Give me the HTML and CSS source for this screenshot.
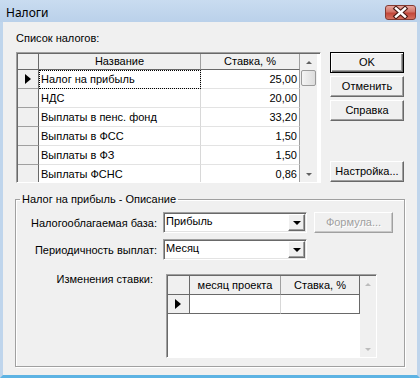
FILE: index.html
```html
<!DOCTYPE html>
<html lang="ru">
<head>
<meta charset="utf-8">
<title>Налоги</title>
<link rel="stylesheet" href="styles.css">
</head>
<body>
<div class="window">
  <div class="titlebar">
    <span class="title">Налоги</span>
    <span class="close">
      <svg width="29" height="13" viewBox="0 0 29 13">
        <path d="M10 2.5 L19 10.5 M19 2.5 L10 10.5" stroke="#4a1a14" stroke-width="4.6" stroke-linecap="square"/>
        <path d="M10 2.5 L19 10.5 M19 2.5 L10 10.5" stroke="#fff" stroke-width="2.4" stroke-linecap="square"/>
      </svg>
    </span>
  </div>

  <div class="client">
    <div class="top">
      <div class="list">
        <div class="caption">Список налогов:</div>
        <div class="grid tax-grid">
          <div class="grid-body">
            <div class="row head">
              <div class="cell ind"></div>
              <div class="cell center">Название</div>
              <div class="cell center">Ставка, %</div>
            </div>
            <div class="row">
              <div class="cell ind"><span class="arrow"></span></div>
              <div class="cell focus">Налог на прибыль</div>
              <div class="cell num">25,00</div>
            </div>
            <div class="row">
              <div class="cell ind"></div>
              <div class="cell">НДС</div>
              <div class="cell num">20,00</div>
            </div>
            <div class="row">
              <div class="cell ind"></div>
              <div class="cell">Выплаты в пенс. фонд</div>
              <div class="cell num">33,20</div>
            </div>
            <div class="row">
              <div class="cell ind"></div>
              <div class="cell">Выплаты в ФСС</div>
              <div class="cell num">1,50</div>
            </div>
            <div class="row">
              <div class="cell ind"></div>
              <div class="cell">Выплаты в ФЗ</div>
              <div class="cell num">1,50</div>
            </div>
            <div class="row">
              <div class="cell ind"></div>
              <div class="cell">Выплаты ФСНС</div>
              <div class="cell num">0,86</div>
            </div>
          </div>
          <div class="vscroll">
            <span class="sarrow up"></span>
            <span class="thumb"></span>
            <span class="track"></span>
            <span class="sarrow down"></span>
          </div>
        </div>
      </div>
      <div class="buttons">
        <div class="btn default">OK</div>
        <div class="btn">Отменить</div>
        <div class="btn">Справка</div>
        <div class="btn setup">Настройка...</div>
      </div>
    </div>

    <fieldset class="group">
      <legend>Налог на прибыль - Описание</legend>
      <div class="form">
        <div class="label">Налогооблагаемая база:</div>
        <div class="field">
          <div class="combo">Прибыль<span class="drop"></span></div>
          <div class="btn disabled">Формула...</div>
        </div>
        <div class="label">Периодичность выплат:</div>
        <div class="field">
          <div class="combo">Месяц<span class="drop"></span></div>
        </div>
        <div class="label top-label">Изменения ставки:</div>
        <div class="field">
          <div class="grid rate-grid">
            <div class="grid-body">
              <div class="row head">
                <div class="cell ind"></div>
                <div class="cell center">месяц проекта</div>
                <div class="cell center">Ставка, %</div>
              </div>
              <div class="row current">
                <div class="cell ind"><span class="arrow"></span></div>
                <div class="cell"></div>
                <div class="cell"></div>
              </div>
            </div>
            <div class="vscroll off">
              <span class="sarrow up"></span>
              <span class="track"></span>
              <span class="sarrow down"></span>
            </div>
          </div>
        </div>
      </div>
    </fieldset>
  </div>
</div>
</body>
</html>
```

FILE: styles.css
```css
* { box-sizing: border-box; }

body {
  margin: 0;
  font-family: "Liberation Sans", Arial, sans-serif;
  font-size: 11px;
  color: #000;
}

.window {
  width: 420px;
  height: 378px;
  display: flex;
  flex-direction: column;
  background: #bfd5ec;
}

/* title bar */
.titlebar {
  height: 22px;
  display: flex;
  align-items: center;
  justify-content: space-between;
  padding: 0 4px 0 6px;
  background: linear-gradient(#c9dcf0, #bad1ea);
}
.title {
  font-family: "Noto Sans", "Liberation Sans", sans-serif;
  font-size: 12px;
  margin-top: 2px;
}
.close {
  width: 31px;
  height: 15px;
  margin-top: 3px;
  border: 1px solid #833a32;
  border-radius: 3px;
  background: linear-gradient(#e7a59d 0%, #d27468 45%, #c2473a 55%, #d4705f 100%);
  display: flex;
  align-items: center;
  justify-content: center;
}

/* client area */
.client {
  flex: 1;
  display: flex;
  flex-direction: column;
  background: #f0f0f0;
  border: 3px solid #bfd5ec;
  border-top: 0;
  border-bottom-color: #5db3e3;
  padding: 9px 13px 0 13px;
}

.top {
  display: flex;
}
.list {
  width: 305px;
}
.caption {
  line-height: 14px;
  margin-bottom: 7px;
}

.buttons {
  width: 74px;
  margin-left: 9px;
  padding-top: 21px;
  display: flex;
  flex-direction: column;
  gap: 3px;
}
.btn {
  height: 21px;
  line-height: 19px;
  text-align: center;
  background: #f0f0f0;
  border: 1px solid;
  border-color: #fff #696969 #696969 #fff;
  box-shadow: inset -1px -1px 0 #a0a0a0;
}
.btn.default {
  border-color: #000;
  box-shadow: inset 1px 1px 0 #fff, inset -1px -1px 0 #696969, inset -2px -2px 0 #a0a0a0;
}
.btn.setup {
  margin-top: auto;
  margin-bottom: 1px;
}
.btn.disabled {
  width: 79px;
  margin-left: 7px;
  color: #a0a0a0;
  text-shadow: 1px 1px 0 #fff;
  border-color: #fff #a0a0a0 #a0a0a0 #fff;
  box-shadow: inset -1px -1px 0 #c8c8c8;
}

/* grids */
.grid {
  display: flex;
  background: #fff;
  border: 1px solid #a0a0a0;
  border-right-color: #fff;
  border-bottom-color: #fff;
  box-shadow: inset 1px 1px 0 #696969;
  overflow: hidden;
  padding: 1px 0 0 1px;
}
.tax-grid {
  height: 131px;
}
.row {
  display: grid;
  height: 19px;
}
.tax-grid .grid-body { width: 282px; }
.tax-grid .row { grid-template-columns: 21px 162px 99px; }
.tax-grid .row.head { height: 16px; }

.cell {
  border-right: 1px solid #d8d8d8;
  border-bottom: 1px solid #e3e3e3;
  padding: 0 2px;
  line-height: 18px;
  white-space: nowrap;
  overflow: hidden;
}
.cell.num {
  text-align: right;
  border-right-color: #a0a0a0;
}
.cell.center { text-align: center; }
.head .cell {
  background: #f0f0f0;
  line-height: 15px;
  border-right-color: #a0a0a0;
  border-bottom-color: #696969;
}
.cell.ind {
  background: #f0f0f0;
  border-right-color: #696969;
  border-bottom-color: #a0a0a0;
  display: flex;
  align-items: center;
  padding-left: 7px;
}
.head .cell.ind { border-bottom-color: #696969; }
.cell.focus {
  outline: 1px dotted #000;
  outline-offset: -1px;
}
.arrow {
  width: 0;
  height: 0;
  border-left: 6px solid #000;
  border-top: 5px solid transparent;
  border-bottom: 5px solid transparent;
}

.vscroll {
  width: 17px;
  display: flex;
  flex-direction: column;
  background: #f0f0f0;
}
.sarrow {
  height: 16px;
  display: flex;
  align-items: center;
  justify-content: center;
}
.sarrow::after {
  content: "";
  border-left: 3px solid transparent;
  border-right: 3px solid transparent;
}
.sarrow.up::after { border-bottom: 3px solid #606060; }
.sarrow.down::after { border-top: 3px solid #606060; }
.vscroll.off .sarrow.up::after { border-bottom-color: #bcbcbc; }
.vscroll.off .sarrow.down::after { border-top-color: #bcbcbc; }
.thumb {
  height: 16px;
  margin: 0 1px;
  border: 1px solid #9a9a9a;
  border-radius: 2px;
  background: linear-gradient(90deg, #f4f4f4, #dcdcdc);
}
.track { flex: 1; }

/* group box */
.group {
  flex: 1;
  margin: 9px 0 8px -1px;
  width: 390px;
  padding: 6px 4px 0 4px;
  border: 1px solid #a0a0a0;
  box-shadow: 1px 1px 0 #fff, inset 1px 1px 0 #fff;
}
.group legend {
  padding: 0 2px;
  line-height: 14px;
}

.form {
  display: grid;
  grid-template-columns: 137px auto;
  column-gap: 6px;
  row-gap: 6px;
}
.label {
  text-align: right;
  align-self: center;
}
.label.top-label {
  align-self: start;
  margin-top: 7px;
  padding-right: 4px;
}
.field {
  display: flex;
}
.combo {
  position: relative;
  width: 144px;
  height: 21px;
  line-height: 17px;
  padding-left: 2px;
  background: #fff;
  border: 1px solid;
  border-color: #a0a0a0 #fff #fff #a0a0a0;
  box-shadow: inset 1px 1px 0 #696969, inset -1px -1px 0 #e3e3e3;
}
.drop {
  position: absolute;
  right: 1px;
  top: 1px;
  width: 17px;
  height: 17px;
  background: #f0f0f0;
  border: 1px solid;
  border-color: #fff #696969 #696969 #fff;
  box-shadow: inset -1px -1px 0 #a0a0a0;
  display: flex;
  align-items: center;
  justify-content: center;
}
.drop::after {
  content: "";
  border-left: 4px solid transparent;
  border-right: 4px solid transparent;
  border-top: 4px solid #000;
}

.rate-grid {
  margin-top: 8px;
  margin-left: 3px;
  width: 211px;
  height: 84px;
}
.rate-grid .grid-body { width: 192px; }
.rate-grid .row { grid-template-columns: 22px 91px 79px; }
.rate-grid .row.head { height: 19px; }
.rate-grid .head .cell { line-height: 18px; }
.rate-grid .row.current .cell { border-bottom-color: #696969; }
.rate-grid .row.current .cell:last-child { border-right-color: #696969; }
.rate-grid .head .cell:last-child { border-right-color: #696969; }
```
